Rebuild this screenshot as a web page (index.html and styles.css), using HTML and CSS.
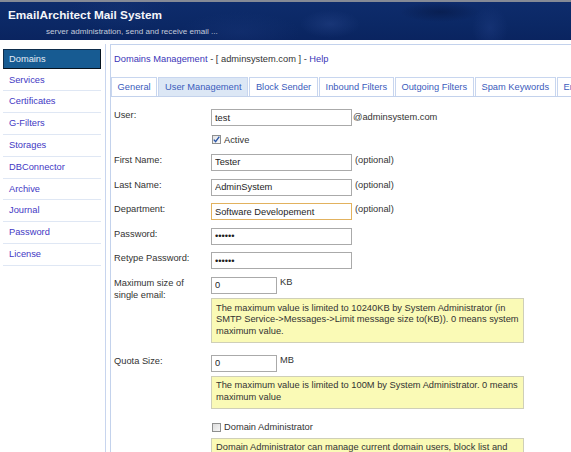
FILE: index.html
```html
<!DOCTYPE html>
<html>
<head>
<meta charset="utf-8">
<title>EmailArchitect Mail System</title>
<link rel="stylesheet" href="styles.css">
</head>
<body>
<header class="header">
  <div class="title">EmailArchitect Mail System</div>
  <div class="subtitle">server administration, send and receive email ...</div>
</header>
<div class="main">
  <nav class="sidebar">
    <a class="nav-item active">Domains</a>
    <a class="nav-item">Services</a>
    <a class="nav-item">Certificates</a>
    <a class="nav-item">G-Filters</a>
    <a class="nav-item">Storages</a>
    <a class="nav-item">DBConnector</a>
    <a class="nav-item">Archive</a>
    <a class="nav-item">Journal</a>
    <a class="nav-item">Password</a>
    <a class="nav-item">License</a>
  </nav>
  <section class="panel">
    <div class="panel-title"><a class="link">Domains Management</a> - [ adminsystem.com ] - <a class="link">Help</a></div>
    <div class="tabs">
      <a class="tab">General</a>
      <a class="tab active">User Management</a>
      <a class="tab">Block Sender</a>
      <a class="tab">Inbound Filters</a>
      <a class="tab">Outgoing Filters</a>
      <a class="tab">Spam Keywords</a>
      <a class="tab">Encryption</a>
    </div>
    <form class="form">
      <div class="row">
        <label class="label">User:</label>
        <div class="field"><input class="input" type="text" value="test"><span class="suffix mid">@adminsystem.com</span></div>
      </div>
      <div class="row check-row">
        <span class="label"></span>
        <div class="field"><span class="checkbox checked"><svg viewBox="0 0 9 9" width="9" height="9"><path d="M1.8 4.6 L3.6 6.6 L7.3 1.6" fill="none" stroke="#2a56a8" stroke-width="1.4"/></svg></span><span class="check-text">Active</span></div>
      </div>
      <div class="row">
        <label class="label">First Name:</label>
        <div class="field"><input class="input" type="text" value="Tester"><span class="suffix">(optional)</span></div>
      </div>
      <div class="row">
        <label class="label">Last Name:</label>
        <div class="field"><input class="input" type="text" value="AdminSystem"><span class="suffix">(optional)</span></div>
      </div>
      <div class="row">
        <label class="label">Department:</label>
        <div class="field"><input class="input focused" type="text" value="Software Developement"><span class="suffix">(optional)</span></div>
      </div>
      <div class="row">
        <label class="label">Password:</label>
        <div class="field"><input class="input" type="password" value="abcdef"></div>
      </div>
      <div class="row">
        <label class="label">Retype Password:</label>
        <div class="field"><input class="input" type="password" value="abcdef"></div>
      </div>
      <div class="row row-note">
        <label class="label">Maximum size of<br>single email:</label>
        <div class="field-col">
          <div class="field"><input class="input small" type="text" value="0"><span class="suffix unit">KB</span></div>
          <div class="note">The maximum value is limited to 10240KB by System Administrator (in SMTP Service-&gt;Messages-&gt;Limit message size to(KB)). 0 means system maximum value.</div>
        </div>
      </div>
      <div class="row row-note">
        <label class="label">Quota Size:</label>
        <div class="field-col">
          <div class="field"><input class="input small" type="text" value="0"><span class="suffix unit">MB</span></div>
          <div class="note">The maximum value is limited to 100M by System Administrator. 0 means maximum value</div>
        </div>
      </div>
      <div class="row row-admin">
        <span class="label"></span>
        <div class="field-col">
          <div class="field check-line"><span class="checkbox"></span><span class="check-text">Domain Administrator</span></div>
          <div class="note admin-note">Domain Administrator can manage current domain users, block list and filters.</div>
        </div>
      </div>
    </form>
  </section>
</div>
</body>
</html>
```
FILE: styles.css
```css
html, body {
  margin: 0;
  padding: 0;
  overflow: hidden;
}

body {
  width: 571px;
  height: 452px;
  background: #ffffff;
  font-family: "Liberation Sans", Arial, sans-serif;
  font-size: 9.3px;
  color: #333333;
}

.header {
  height: 38px;
  border-top: 2px solid #858a96;
  background:
    radial-gradient(ellipse 30px 14px at 330px 22px, rgba(40, 70, 140, 0.45), transparent),
    radial-gradient(ellipse 18px 22px at 490px 26px, rgba(30, 60, 130, 0.5), transparent),
    radial-gradient(ellipse 40px 10px at 440px 10px, rgba(5, 20, 60, 0.5), transparent),
    radial-gradient(ellipse 60px 20px at 240px 30px, rgba(30, 60, 130, 0.3), transparent),
    radial-gradient(ellipse 50px 20px at 120px 8px, rgba(25, 55, 120, 0.3), transparent),
    linear-gradient(180deg, #0e2c6c 0%, #0b2865 60%, #0a2460 100%);
  color: #ffffff;
}

.title {
  padding: 6.4px 0 0 8px;
  font-size: 11.8px;
  font-weight: bold;
  line-height: 14px;
  color: #f4f6fa;
}

.subtitle {
  margin-top: 4.6px;
  padding-left: 46px;
  font-size: 8.1px;
  line-height: 10px;
  color: #c3cbdc;
}

.main {
  display: flex;
  margin-top: 4px;
  height: 408px;
}

.sidebar {
  flex: none;
  width: 102px;
  padding: 4.7px 0 0 3px;
  border-right: 1px solid #c8d5ee;
  display: flex;
  flex-direction: column;
}

.nav-item {
  display: block;
  width: 98px;
  box-sizing: border-box;
  height: 21.8px;
  line-height: 20.8px;
  padding-left: 6px;
  border-bottom: 1px solid #dfe7f4;
  color: #4338c4;
  text-decoration: none;
}

.nav-item.active {
  height: 20px;
  line-height: 18px;
  margin-bottom: 1px;
  padding-left: 5px;
  background: #175b92;
  border: 1px solid #0d2c4b;
  border-right-color: #06131f;
  border-bottom-color: #06131f;
  color: #e3ecf6;
}

.panel {
  flex: none;
  width: 540px;
  margin-left: 4px;
  border: 1px solid #c3d2ec;
  border-bottom: none;
}

.panel-title {
  padding: 8px 0 0 3px;
  line-height: 12px;
  color: #333333;
}

.link {
  color: #3b36b8;
  text-decoration: none;
}

.tabs {
  display: flex;
  gap: 1.2px;
  margin-top: 12px;
  border-bottom: 1px solid #c3d2ec;
  white-space: nowrap;
}

.tab {
  flex: none;
  height: 18px;
  line-height: 18px;
  padding: 0 5.6px;
  border: 1px solid #c8d6ef;
  border-bottom: none;
  background: #ffffff;
  color: #3b5cbc;
  text-decoration: none;
}

.tab.active {
  background: #dce7f5;
}

.form {
  padding: 12px 0 0 3px;
}

.row {
  display: grid;
  grid-template-columns: 97px auto;
  margin-bottom: 7.6px;
}

.label {
  line-height: 12px;
  color: #333333;
}

.field {
  display: flex;
  align-items: flex-start;
}

.field-col {
  display: flex;
  flex-direction: column;
}

.input {
  box-sizing: border-box;
  width: 141px;
  height: 17px;
  margin: 0;
  padding: 0 3px;
  border: 1px solid #aaaaaa;
  border-radius: 0;
  background: #ffffff;
  font-family: "Liberation Sans", Arial, sans-serif;
  font-size: 9.3px;
  color: #1e1e1e;
  outline: none;
}

.input.small {
  width: 66px;
}

.input.focused {
  border-color: #e2b25e;
}

.suffix {
  padding-left: 3px;
  line-height: 12px;
  color: #333333;
}

.suffix.mid {
  padding-left: 1px;
  line-height: 17px;
}

.suffix.unit {
  padding-left: 3px;
  line-height: 10px;
}

.check-row {
  height: 12.8px;
}

.checkbox {
  box-sizing: border-box;
  width: 9px;
  height: 9px;
  margin: 1px 3px 0 1px;
  border: 1px solid #8e8f8f;
  background: linear-gradient(135deg, #dcdcdc, #f6f6f6);
  display: flex;
}

.checkbox svg {
  margin: -1px;
}

.checkbox.checked {
  background: linear-gradient(135deg, #e4e4e4, #fafafa);
}

.check-text {
  line-height: 12px;
  color: #333333;
}

.note {
  box-sizing: border-box;
  width: 313px;
  margin-top: 4px;
  padding: 3.6px 4px 4px 4px;
  border: 1px solid #cfcfb8;
  background: #fafab6;
  line-height: 11.7px;
  color: #333333;
}

.row-note {
  margin-bottom: 12px;
}

.row-admin {
  margin-top: 11px;
}

.check-line {
  height: 12px;
  align-items: flex-start;
}

.check-line .checkbox {
  margin-top: 2.5px;
}

.admin-note {
  margin-top: 5px;
}
```
